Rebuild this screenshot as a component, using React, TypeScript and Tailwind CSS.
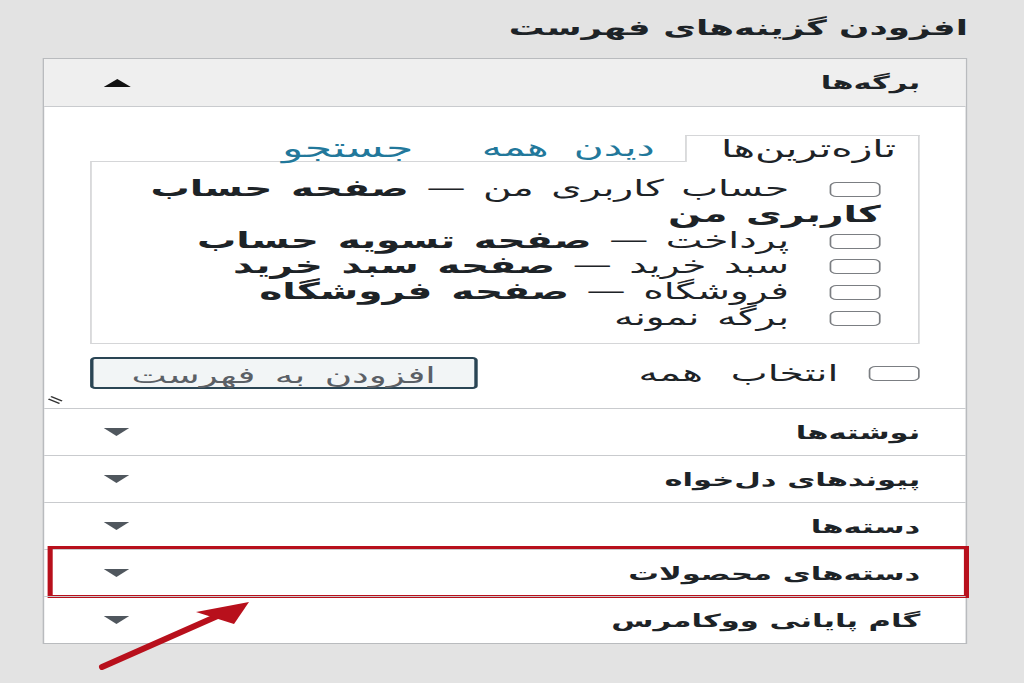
import React from "react";

const font = { fontFamily: '"DejaVu Sans", "Noto Sans", sans-serif' };

// The reference is a horizontally stretched capture, so the page is laid out
// at 1024 / 1.7 px wide and stretched back to the full width.

function Checkbox() {
  return (
    <span className="inline-block align-middle w-[30px] h-[15px] rounded-[4px] border-[1.5px] border-[#7b7e82] bg-white" />
  );
}

function DownCaret() {
  return (
    <svg width="15" height="8" viewBox="0 0 15 8">
      <polygon points="0,0 15,0 7.5,8" fill="#50575e" />
    </svg>
  );
}

const pages: { title: string; state?: string; rest?: string }[] = [
  { title: "حساب کاربری من", state: "صفحه حساب", rest: "کاربری من" },
  { title: "پرداخت", state: "صفحه تسویه حساب" },
  { title: "سبد خرید", state: "صفحه سبد خرید" },
  { title: "فروشگاه", state: "صفحه فروشگاه" },
  { title: "برگه نمونه" },
];

const sections = ["نوشته‌ها", "پیوندهای دل‌خواه", "دسته‌ها", "دسته‌های محصولات", "گام پایانی ووکامرس"];

export default function App() {
  return (
    <div style={font} className="relative w-[1024px] h-[683px] overflow-hidden bg-[#e3e3e3] text-[#1d2327]">
      <div dir="rtl" className="w-[602.35px] origin-left scale-x-[1.7]">
        {/* Title */}
        <div className="pr-[33px] pt-[13px] h-[58px]">
          <h2 className="text-[21px] font-bold leading-[30px]">افزودن گزینه‌های فهرست</h2>
        </div>

        {/* Accordion panel */}
        <div className="pl-[24.7px] pr-[33px]">
          <div className="border border-[#b9bbbe] bg-white">
            {/* Open section header */}
            <div className="flex items-center justify-between h-[48px] pr-[27px] pl-[35px] bg-[#efefef] border-b border-[#c9cbce]">
              <span className="text-[18px] font-bold">برگه‌ها</span>
              <svg width="16" height="8" viewBox="0 0 16 8">
                <polygon points="0,8 16,8 8,0" fill="#111" />
              </svg>
            </div>

            {/* Open section body */}
            <div className="relative pt-[27px] px-[27.2px] pb-[18px]">
              <div className="flex items-end h-[27px]">
                <div className="w-[138px] h-[27px] flex items-center pr-[13px] border border-b-0 border-[#d5d6d8] bg-white text-[24px] leading-[26px] relative top-px">
                  تازه‌ترین‌ها
                </div>
                <a className="w-[160px] pr-[18px] text-[24px] leading-[26px] [word-spacing:0.3em] text-[#22789b]">دیدن همه</a>
                <a className="text-[26px] leading-[26px] text-[#22789b]">جستجو</a>
              </div>
              <div className="border border-[#d5d6d8] pt-[14px] pb-[12px] pr-[22px] pl-[6px]">
                <ul className="text-[23px] leading-[25.8px] [word-spacing:3px]">
                  {pages.map((p) => (
                    <li key={p.title} className="whitespace-nowrap">
                      <Checkbox />
                      <span className="mr-[24px]">{p.title}</span>
                      {p.state && (
                        <>
                          <span> — </span>
                          <span className="font-bold">{p.state}</span>
                        </>
                      )}
                      {p.rest && (
                        <>
                          <br />
                          <span className="font-bold">{p.rest}</span>
                        </>
                      )}
                    </li>
                  ))}
                </ul>
              </div>
              <div className="flex items-center justify-between mt-[12px]">
                <label className="flex items-center gap-[18px] text-[23px] [word-spacing:0.4em]">
                  <Checkbox />
                  <span>انتخاب همه</span>
                </label>
                <button className="w-[228px] h-[32px] rounded-[3px] border-2 border-[#2a4554] bg-[#f2f5f6] text-[22px] [word-spacing:0.2em] text-[#5b6066]">
                  افزودن به فهرست
                </button>
              </div>
              <svg className="absolute left-[2px] bottom-[4px]" width="9" height="8" viewBox="0 0 9 8">
                <path d="M0.5 3 L7 7.5 M2 0.5 L8.5 5" stroke="#333" strokeWidth="1.2" />
              </svg>
            </div>

            {/* Collapsed sections */}
            {sections.map((s) => (
              <div key={s} className="relative flex items-center justify-between h-[47px] pr-[27px] pl-[35px] border-t border-[#c9cbce]">
                <span className="text-[18px] font-bold">{s}</span>
                <DownCaret />
                {s === "دسته‌های محصولات" && (
                  <div className="absolute top-[-4px] bottom-[-2px] left-[2.5px] right-[-2px] border-[3px] border-[#b8101c]" />
                )}
              </div>
            ))}
          </div>
        </div>
      </div>

      {/* Annotation arrow */}
      <svg className="absolute left-0 top-0" width="1024" height="683" viewBox="0 0 1024 683">
        <line x1="102" y1="667" x2="222" y2="614" stroke="#b8101c" strokeWidth="6" strokeLinecap="round" />
        <polygon points="249,602 196,612 234,624" fill="#b8101c" />
      </svg>
    </div>
  );
}
